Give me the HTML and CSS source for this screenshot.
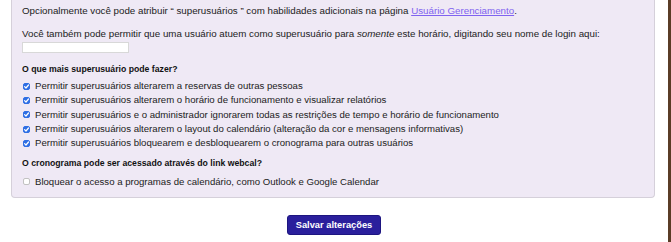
FILE: index.html
```html
<!DOCTYPE html>
<html lang="pt">
<head>
<meta charset="utf-8">
<title>Superusuários</title>
<link rel="stylesheet" href="styles.css">
</head>
<body>
<div class="page">
  <div class="panel">
    <p class="intro">Opcionalmente você pode atribuir “ superusuários ” com habilidades adicionais na página <a href="#" class="link">Usuário Gerenciamento</a>.</p>
    <p class="intro second">Você também pode permitir que uma usuário atuem como superusuário para <em>somente</em> este horário, digitando seu nome de login aqui:</p>
    <input class="login" type="text">
    <h4 class="heading">O que mais superusuário pode fazer?</h4>
    <ul class="options">
      <li><span class="cb checked"><svg viewBox="0 0 8 8" width="7" height="7"><path d="M1.8 4.1 L3.4 5.7 L6.3 2.3" fill="none" stroke="#fff" stroke-width="1.4" stroke-linecap="round" stroke-linejoin="round"/></svg></span>Permitir superusuários alterarem a reservas de outras pessoas</li>
      <li><span class="cb checked"><svg viewBox="0 0 8 8" width="7" height="7"><path d="M1.8 4.1 L3.4 5.7 L6.3 2.3" fill="none" stroke="#fff" stroke-width="1.4" stroke-linecap="round" stroke-linejoin="round"/></svg></span>Permitir superusuários alterarem o horário de funcionamento e visualizar relatórios</li>
      <li><span class="cb checked"><svg viewBox="0 0 8 8" width="7" height="7"><path d="M1.8 4.1 L3.4 5.7 L6.3 2.3" fill="none" stroke="#fff" stroke-width="1.4" stroke-linecap="round" stroke-linejoin="round"/></svg></span>Permitir superusuários e o administrador ignorarem todas as restrições de tempo e horário de funcionamento</li>
      <li><span class="cb checked"><svg viewBox="0 0 8 8" width="7" height="7"><path d="M1.8 4.1 L3.4 5.7 L6.3 2.3" fill="none" stroke="#fff" stroke-width="1.4" stroke-linecap="round" stroke-linejoin="round"/></svg></span>Permitir superusuários alterarem o layout do calendário (alteração da cor e mensagens informativas)</li>
      <li><span class="cb checked"><svg viewBox="0 0 8 8" width="7" height="7"><path d="M1.8 4.1 L3.4 5.7 L6.3 2.3" fill="none" stroke="#fff" stroke-width="1.4" stroke-linecap="round" stroke-linejoin="round"/></svg></span>Permitir superusuários bloquearem e desbloquearem o cronograma para outras usuários</li>
    </ul>
    <h4 class="heading heading2">O cronograma pode ser acessado através do link webcal?</h4>
    <ul class="options options2">
      <li><span class="cb"></span>Bloquear o acesso a programas de calendário, como Outlook e Google Calendar</li>
    </ul>
  </div>
  <div class="actions">
    <button class="save" type="button">Salvar alterações</button>
  </div>
</div>
</body>
</html>
```
FILE: styles.css
```css
html, body {
  margin: 0;
  padding: 0;
  background: #ffffff;
  overflow: hidden;
}
body {
  font-family: "Liberation Sans", Arial, Helvetica, sans-serif;
  font-size: 9.6px;
  color: #222222;
}
.page {
  width: 668px;
  height: 242px;
  border-right: 3px solid #5a3c26;
  box-sizing: content-box;
}
.panel {
  margin-left: 11px;
  width: 644px;
  box-sizing: border-box;
  background: #efe9f5;
  border: 1px solid #d5d0da;
  border-top: none;
  border-radius: 0 0 4px 4px;
  padding: 4px 10px 8px 10px;
}
.intro {
  margin: 0;
  font-size: 9.75px;
  line-height: 13px;
}
.second {
  margin-top: 10px;
}
.link {
  color: #7f63f0;
  text-decoration: underline;
}
.login {
  display: block;
  margin: 2px 0 0 0;
  width: 107px;
  height: 11px;
  box-sizing: border-box;
  border: 1px solid #d8d8d8;
  background: #ffffff;
  padding: 0;
}
.heading {
  margin: 10px 0 0 0;
  font-size: 8.7px;
  line-height: 12px;
  font-weight: bold;
  color: #111111;
}
.heading2 {
  margin-top: 7px;
}
.options {
  list-style: none;
  margin: 4px 0 0 0;
  padding: 0;
}
.options2 {
  margin-top: 5px;
}
.options li {
  display: flex;
  align-items: center;
  height: 14.3px;
  line-height: 14px;
}
.cb {
  display: inline-flex;
  align-items: center;
  justify-content: center;
  width: 7px;
  height: 7px;
  box-sizing: border-box;
  margin: 0 5px 0 1px;
  border-radius: 2px;
  border: 1px solid #c2c2c2;
  background: #ffffff;
  flex: none;
}
.cb.checked {
  background: #2f6fe4;
  border-color: #2f6fe4;
}
.cb svg {
  display: block;
  flex: none;
}
.actions {
  display: flex;
  justify-content: center;
  padding-top: 17px;
}
.save {
  font-family: "Liberation Sans", Arial, Helvetica, sans-serif;
  font-size: 9.3px;
  font-weight: bold;
  color: #ffffff;
  background: #2a1f9c;
  border: 1px solid #1d1580;
  border-radius: 3px;
  width: 94px;
  height: 20px;
  padding: 0;
}
```
